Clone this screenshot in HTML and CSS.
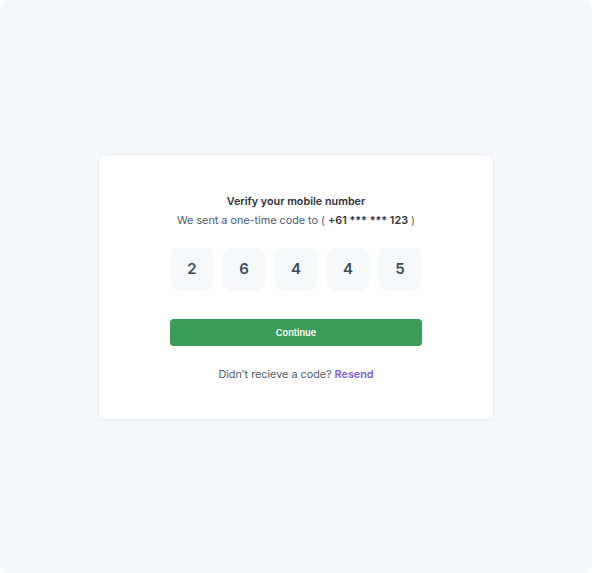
FILE: index.html
```html
<!DOCTYPE html>
<html lang="en">
<head>
    <meta charset="UTF-8">
    <meta name="viewport" content="width=device-width, initial-scale=1.0">
    <title>Verify your mobile number</title>
    <link rel="stylesheet" href="styles.css">
</head>
<body>
    <div class="page">
        <div class="card">
            <h1 class="title">Verify your mobile number</h1>
            <p class="subtitle">We sent a one-time code to ( <strong>+61 *** *** 123</strong> )</p>

            <div class="code-inputs">
                <input type="text" maxlength="1" value="2">
                <input type="text" maxlength="1" value="6">
                <input type="text" maxlength="1" value="4">
                <input type="text" maxlength="1" value="4">
                <input type="text" maxlength="1" value="5">
            </div>

            <button class="continue-button" type="button">Continue</button>

            <p class="resend">Didn’t recieve a code? <a href="#">Resend</a></p>
        </div>
    </div>
</body>
</html>
```

FILE: styles.css
```css
html, body {
    margin: 0;
    padding: 0;
    height: 100%;
    background: #ffffff;
}
body {
    font-family: Inter, "Liberation Sans", sans-serif;
}
.page {
    height: 100%;
    box-sizing: border-box;
    background-color: #f5f8fb;
    border-radius: 10px;
    display: flex;
    align-items: center;
    justify-content: center;
}
.card {
    width: 396px;
    box-sizing: border-box;
    background: white;
    border: 1px solid #edf0f4;
    border-radius: 8px;
    box-shadow: 0 1px 2px rgba(0,0,0,0.03);
    padding: 39px 0 36px;
    display: flex;
    flex-direction: column;
    align-items: center;
}
.title {
    margin: 0;
    font-size: 10.8px;
    line-height: 16px;
    font-weight: 600;
    color: #2f3237;
}
.subtitle {
    margin: 3px 0 0;
    font-size: 10.8px;
    line-height: 16px;
    color: #4d5b70;
}
.subtitle strong {
    font-weight: 600;
    color: #2f3237;
}
.code-inputs {
    display: flex;
    gap: 10px;
    margin-top: 19px;
}
.code-inputs input {
    width: 42px;
    height: 42px;
    box-sizing: border-box;
    border: none;
    border-radius: 8px;
    background: #f6f8fa;
    text-align: center;
    font-family: inherit;
    font-size: 15px;
    font-weight: 600;
    color: #3f4c5f;
    padding: 0;
    outline: none;
}
.continue-button {
    margin-top: 29px;
    width: 252px;
    height: 27px;
    background-color: #3a9d57;
    color: white;
    border: none;
    border-radius: 4px;
    font-family: inherit;
    font-size: 9.2px;
    font-weight: 600;
    cursor: pointer;
}
.resend {
    margin: 21px 0 0;
    font-size: 10.8px;
    line-height: 16px;
    color: #4d5b70;
}
.resend a {
    color: #7b5fd9;
    font-weight: 600;
    text-decoration: none;
}
```
